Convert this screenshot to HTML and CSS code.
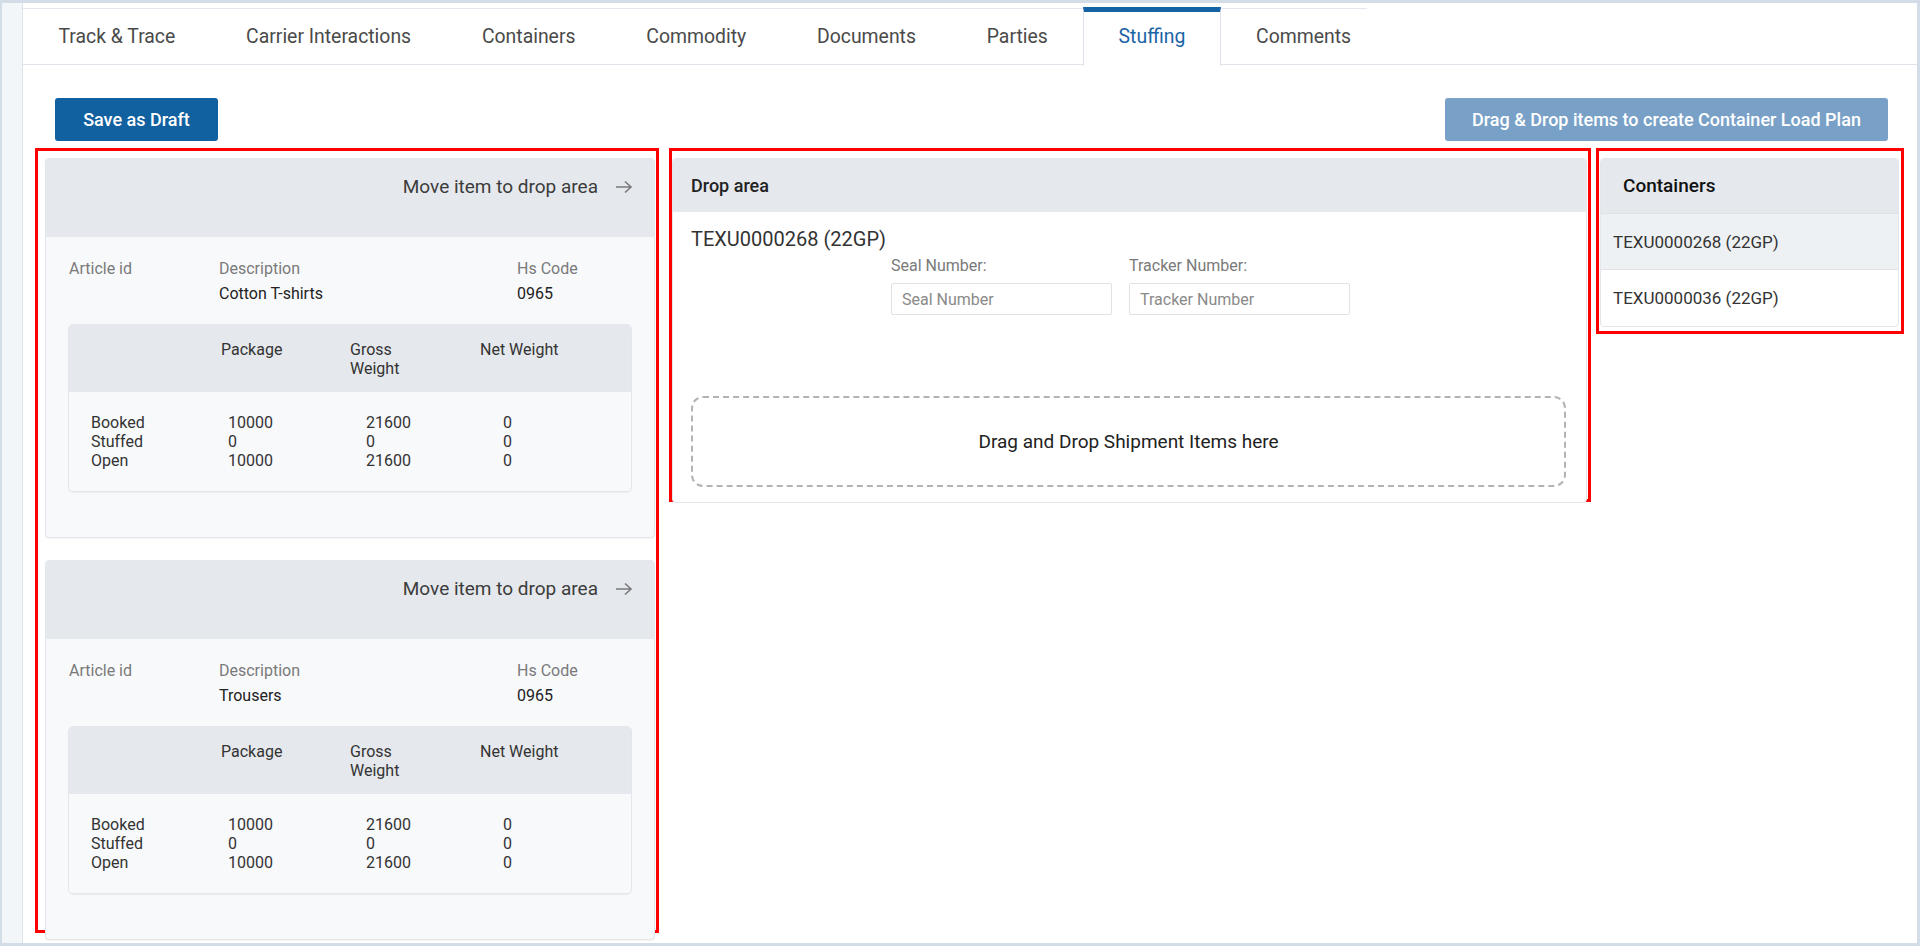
FILE: index.html
```html
<!DOCTYPE html>
<html>
<head>
  <title>Stuffing</title>
  <link rel="stylesheet" href="styles.css">
</head>
<body>
  <div class="frame">
    <div class="sidebar"></div>
    <div class="main">
      <div class="tabs">
        <div class="tab-list">
          <div class="tab">Track &amp; Trace</div>
          <div class="tab">Carrier Interactions</div>
          <div class="tab">Containers</div>
          <div class="tab">Commodity</div>
          <div class="tab">Documents</div>
          <div class="tab">Parties</div>
          <div class="tab active">Stuffing</div>
          <div class="tab">Comments</div>
        </div>
      </div>

      <div class="toolbar">
        <button class="btn btn-primary">Save as Draft</button>
        <button class="btn btn-disabled">Drag &amp; Drop items to create Container Load Plan</button>
      </div>

      <div class="columns">
        <div class="mark col-items">
          <div class="item-card">
            <div class="item-head">
              <span>Move item to drop area</span>
              <svg class="arrow" width="18" height="14" viewBox="0 0 18 14"><path d="M1 7H16M10 1.5L16 7L10 12.5" fill="none" stroke="#7a7a7a" stroke-width="1.6"/></svg>
            </div>
            <div class="item-body">
              <div class="article">
                <div class="label">Article id</div>
                <div class="label">Description</div>
                <div class="label">Hs Code</div>
                <div></div>
                <div class="value">Cotton T-shirts</div>
                <div class="value">0965</div>
              </div>
              <div class="qty">
                <div class="qty-head">
                  <div></div>
                  <div>Package</div>
                  <div class="narrow">Gross Weight</div>
                  <div>Net Weight</div>
                </div>
                <div class="qty-rows">
                  <div>Booked</div><div>10000</div><div>21600</div><div>0</div>
                  <div>Stuffed</div><div>0</div><div>0</div><div>0</div>
                  <div>Open</div><div>10000</div><div>21600</div><div>0</div>
                </div>
              </div>
            </div>
          </div>

          <div class="item-card">
            <div class="item-head">
              <span>Move item to drop area</span>
              <svg class="arrow" width="18" height="14" viewBox="0 0 18 14"><path d="M1 7H16M10 1.5L16 7L10 12.5" fill="none" stroke="#7a7a7a" stroke-width="1.6"/></svg>
            </div>
            <div class="item-body">
              <div class="article">
                <div class="label">Article id</div>
                <div class="label">Description</div>
                <div class="label">Hs Code</div>
                <div></div>
                <div class="value">Trousers</div>
                <div class="value">0965</div>
              </div>
              <div class="qty">
                <div class="qty-head">
                  <div></div>
                  <div>Package</div>
                  <div class="narrow">Gross Weight</div>
                  <div>Net Weight</div>
                </div>
                <div class="qty-rows">
                  <div>Booked</div><div>10000</div><div>21600</div><div>0</div>
                  <div>Stuffed</div><div>0</div><div>0</div><div>0</div>
                  <div>Open</div><div>10000</div><div>21600</div><div>0</div>
                </div>
              </div>
            </div>
          </div>
        </div>

        <div class="mark col-drop">
          <div class="panel">
            <div class="panel-head">Drop area</div>
            <div class="drop-body">
              <div class="container-name">TEXU0000268 (22GP)</div>
              <div class="fields">
                <div class="field">
                  <label>Seal Number:</label>
                  <input type="text" placeholder="Seal Number">
                </div>
                <div class="field">
                  <label>Tracker Number:</label>
                  <input type="text" placeholder="Tracker Number">
                </div>
              </div>
              <div class="dropzone">Drag and Drop Shipment Items here</div>
            </div>
          </div>
        </div>

        <div class="mark col-containers">
          <div class="panel">
            <div class="panel-head containers-head">Containers</div>
            <div class="container-list">
              <div class="container-item selected">TEXU0000268 (22GP)</div>
              <div class="container-item">TEXU0000036 (22GP)</div>
            </div>
          </div>
        </div>
      </div>
    </div>
  </div>
</body>
</html>
```

FILE: styles.css
```css
* {
  box-sizing: border-box;
}

body {
  margin: 0;
  padding: 0;
  background-color: #d3dde7;
  font-family: 'Roboto', 'Liberation Sans', sans-serif;
  color: #333;
}

.frame {
  display: flex;
  margin: 3px 3px 0 2px;
  height: 940px;
  background-color: #fff;
  overflow: hidden;
}

.sidebar {
  width: 21px;
  background-color: #f3f6f9;
  border-right: 1px solid #dde3ea;
}

.main {
  flex: 1;
}

/* tabs */
.tabs {
  margin-top: 5px;
  border-bottom: 1px solid #dfe4ea;
  height: 57px;
}

.tab-list {
  display: flex;
  width: 1344px;
  height: 57px;
  border-top: 1px solid #e3e8ee;
}

.tab {
  padding: 0 35.4px;
  line-height: 55px;
  font-size: 19.4px;
  color: #4a4a4a;
  white-space: nowrap;
}

.tab.active {
  margin-top: -2px;
  height: 59px;
  border-top: 5px solid #1463a5;
  border-left: 1px solid #dde3ea;
  border-right: 1px solid #dde3ea;
  background-color: #fff;
  color: #1a64a6;
  padding: 0 34.4px;
  line-height: 50px;
}

/* toolbar */
.toolbar {
  display: flex;
  justify-content: space-between;
  padding: 33px 29px 0 32px;
}

.btn {
  height: 43px;
  padding: 0 14px;
  border: none;
  border-radius: 3px;
  font-family: 'Roboto', sans-serif;
  font-size: 18px;
  font-weight: 500;
  color: #fff;
}

.btn-primary {
  width: 163px;
  background-color: #1160a0;
}

.btn-disabled {
  width: 443px;
  background-color: #79a1c7;
}

/* columns */
.columns {
  display: flex;
  align-items: flex-start;
  margin-top: 7px;
  padding-left: 12px;
}

.mark {
  border: 3px solid #ff0000;
}

.col-items {
  width: 624px;
  height: 785px;
  padding: 7px 1px 0 7px;
}

.col-drop {
  width: 922px;
  height: 354px;
  margin-left: 10px;
  padding: 7px 1px 0 0;
}

.col-containers {
  width: 308px;
  height: 186px;
  margin-left: 5px;
  padding: 7px 2px 0 1px;
}

/* item cards */
.item-card {
  background-color: #f8f9fb;
  border: 1px solid #e3e6ea;
  border-radius: 4px;
  overflow: hidden;
  margin-bottom: 22px;
  box-shadow: 0 1px 1px rgba(0, 0, 0, 0.05);
}

.item-head {
  display: flex;
  justify-content: flex-end;
  align-items: center;
  gap: 17px;
  height: 78px;
  padding: 0 21px 23px 0;
  background-color: #e5e8ec;
  font-size: 19px;
  color: #3c3c3c;
}

.item-body {
  padding: 22px 22px 45px 22px;
}

.article {
  display: grid;
  grid-template-columns: 150px 298px 1fr;
  row-gap: 5px;
  font-size: 16px;
  line-height: 20px;
  padding-left: 1px;
}

.label {
  color: #7a7a7a;
}

.value {
  color: #222;
}

.qty {
  margin-top: 20px;
  border: 1px solid #e3e6ea;
  border-radius: 5px;
  overflow: hidden;
  font-size: 16px;
  line-height: 19px;
  color: #333;
  box-shadow: 0 1px 1px rgba(0, 0, 0, 0.05);
}

.qty-head {
  display: grid;
  grid-template-columns: 152px 129px 130px 1fr;
  height: 67px;
  padding-top: 15px;
  background-color: #e5e8ec;
}

.qty-head .narrow {
  width: 70px;
}

.qty-rows {
  display: grid;
  grid-template-columns: 137px 138px 137px 1fr;
  padding: 21px 0 21px 22px;
}

/* drop area */
.panel {
  background-color: #fff;
  border: 1px solid #e3e6ea;
  border-radius: 4px;
  overflow: hidden;
}

.panel-head {
  height: 53px;
  padding-left: 18px;
  line-height: 53px;
  background-color: #e5e8ec;
  font-size: 18px;
  font-weight: 500;
  color: #222;
}

.drop-body {
  padding: 15px 20px 15px 18px;
}

.container-name {
  font-size: 20px;
  line-height: 24px;
  color: #333;
}

.fields {
  display: flex;
  gap: 17px;
  padding-left: 200px;
  margin-top: 5px;
}

.field {
  display: flex;
  flex-direction: column;
  gap: 8px;
  width: 221px;
}

.field label {
  font-size: 16px;
  line-height: 19px;
  color: #7a7a7a;
}

.field input {
  height: 32px;
  padding: 0 10px;
  border: 1px solid #dfe2e6;
  border-radius: 2px;
  font-family: 'Roboto', sans-serif;
  font-size: 16px;
  color: #333;
}

.field input::placeholder {
  color: #8a8a8a;
}

.dropzone {
  display: flex;
  align-items: center;
  justify-content: center;
  height: 91px;
  margin-top: 81px;
  border: 2px dashed #b3b3b3;
  border-radius: 12px;
  font-size: 19px;
  color: #222;
}

/* containers */
.containers-head {
  height: 54px;
  line-height: 54px;
  padding-left: 22px;
  font-size: 19px;
  color: #111;
}

.container-list {
  border-top: 1px solid #dfe3e8;
  box-shadow: 0 2px 2px rgba(0, 0, 0, 0.08);
}

.container-item {
  height: 56px;
  padding-left: 12px;
  line-height: 56px;
  font-size: 17px;
  color: #333;
}

.container-item.selected {
  background-color: #eef1f4;
  border-bottom: 1px solid #dfe3e8;
}
```
